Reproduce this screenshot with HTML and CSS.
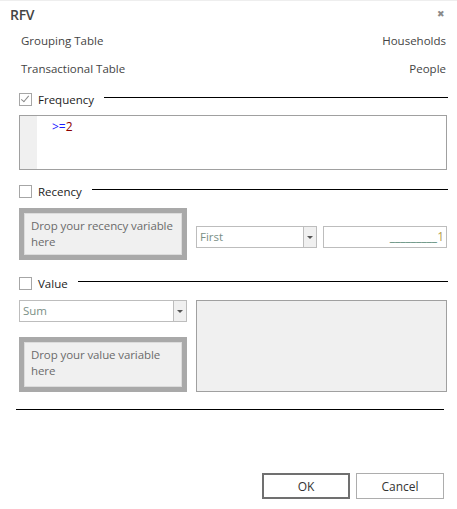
FILE: index.html
```html
<!DOCTYPE html>
<html lang="en">
<head>
	<meta charset="utf-8">
	<title>RFV</title>
	<link rel="stylesheet" href="styles.css">
</head>
<body>
	<div class="dialog">
		<!-- Title bar -->
		<div class="titlebar">
			<span class="title">RFV</span>
			<span class="close">&#x2716;</span>
		</div>

		<!-- Tables -->
		<div class="meta-row"><span>Grouping Table</span><span>Households</span></div>
		<div class="meta-row"><span>Transactional Table</span><span>People</span></div>

		<!-- Frequency -->
		<div class="legend legend-freq">
			<span class="check checked"></span>
			<span class="legend-label">Frequency</span>
			<span class="legend-line"></span>
		</div>
		<div class="editor">
			<div class="gutter"></div>
			<div class="code"><span class="op">&gt;=</span><span class="num">2</span></div>
		</div>

		<!-- Recency -->
		<div class="legend legend-rec">
			<span class="check"></span>
			<span class="legend-label">Recency</span>
			<span class="legend-line"></span>
		</div>
		<div class="recency">
			<div class="dropzone">Drop your recency variable here</div>
			<div class="combo combo-first">
				<span class="combo-text">First</span>
				<span class="combo-btn"><span class="arrow"></span></span>
			</div>
			<div class="numbox"><span class="blank">_________</span><span class="digit">1</span></div>
		</div>

		<!-- Value -->
		<div class="legend legend-val">
			<span class="check"></span>
			<span class="legend-label">Value</span>
			<span class="legend-line"></span>
		</div>
		<div class="value">
			<div class="value-left">
				<div class="combo">
					<span class="combo-text">Sum</span>
					<span class="combo-btn"><span class="arrow"></span></span>
				</div>
				<div class="dropzone dropzone-value">Drop your value variable here</div>
			</div>
			<div class="preview"></div>
		</div>

		<div class="separator"></div>

		<div class="buttons">
			<button class="btn btn-default">OK</button>
			<button class="btn">Cancel</button>
		</div>
	</div>
</body>
</html>
```

FILE: styles.css
```css
body {
	margin: 0;
	background: #fff;
	font-family: "Open Sans", "Noto Sans", sans-serif;
	font-size: 11.5px;
	color: #333;
}

.dialog {
	width: 457px;
	height: 509px;
	padding: 0 10px 0 19px;
	box-sizing: border-box;
	border-top: 1px solid #eee;
}

.titlebar {
	display: flex;
	justify-content: space-between;
	align-items: center;
	height: 26px;
	margin-left: -9px;
	margin-right: 2px;
}

.title {
	font-size: 14px;
	font-weight: 600;
	color: #444;
	letter-spacing: -0.3px;
}

.close {
	font-size: 9px;
	color: #8a8a8a;
	margin-top: -2px;
}

.meta-row {
	display: flex;
	justify-content: space-between;
	height: 28px;
	line-height: 28px;
	padding: 0 1px 0 2px;
	color: #444;
}

.legend {
	display: flex;
	align-items: center;
	height: 22px;
}

.legend-freq {
	margin-top: 5px;
}

.legend-rec {
	margin-top: 10px;
}

.legend-val {
	margin-top: 12px;
}

.check {
	width: 11px;
	height: 11px;
	border: 1px solid #a6a6a6;
	background: #fff;
	position: relative;
	flex: none;
}

.check.checked::after {
	content: "";
	position: absolute;
	left: 3px;
	top: 0px;
	width: 3px;
	height: 7px;
	border: solid #8a8a8a;
	border-width: 0 1px 1px 0;
	transform: rotate(40deg);
}

.legend-label {
	margin-left: 6px;
	font-size: 11.5px;
	color: #222;
}

.legend-line {
	flex: 1;
	height: 1px;
	background: #000;
	margin: -3px -1px 0 10px;
}

.editor {
	display: flex;
	height: 55px;
	margin-top: 5px;
	border: 1px solid #a0a0a0;
	box-sizing: border-box;
}

.gutter {
	width: 17px;
	background: #f0f0f0;
}

.code {
	padding: 4px 0 0 15px;
	font-size: 12px;
	line-height: 14px;
}

.op {
	color: #1a1aff;
}

.num {
	color: #8b0000;
}

.recency {
	display: flex;
	align-items: flex-start;
	margin-top: 6px;
}

.dropzone {
	width: 168px;
	height: 52px;
	flex: none;
	border: 5px solid #a9a9a9;
	outline: 1px solid #dcdcdc;
	outline-offset: -6px;
	background: #f0f0f0;
	padding: 5px 0 0 7px;
	box-sizing: border-box;
	font-size: 11.5px;
	line-height: 16px;
	letter-spacing: -0.1px;
	color: #6b6b6b;
}

.dropzone-value {
	height: 55px;
	margin-top: 15px;
	padding-top: 5px;
}

.combo {
	display: flex;
	width: 168px;
	height: 22px;
	border: 1px solid #bdbdbd;
	box-sizing: border-box;
	background: #fff;
}

.combo-first {
	width: 121px;
	margin: 18px 0 0 9px;
}

.combo-text {
	flex: 1;
	padding-left: 3px;
	line-height: 20px;
	color: #7a8f86;
}

.combo-btn {
	width: 12px;
	border-left: 1px solid #bdbdbd;
	background: #f0f0f0;
	display: flex;
	align-items: center;
	justify-content: center;
}

.arrow {
	width: 0;
	height: 0;
	border-left: 3px solid transparent;
	border-right: 3px solid transparent;
	border-top: 3px solid #555;
}

.numbox {
	flex: 1;
	height: 22px;
	margin: 18px 0 0 6px;
	border: 1px solid #bdbdbd;
	box-sizing: border-box;
	text-align: right;
	padding-right: 2px;
	line-height: 20px;
	color: #5b8a79;
	font-size: 12px;
}

.digit {
	color: #b59f4d;
}

.value {
	display: flex;
	margin-top: 6px;
}

.value-left {
	width: 168px;
}

.preview {
	flex: 1;
	height: 92px;
	margin-left: 9px;
	border: 1px solid #a0a0a0;
	box-sizing: border-box;
	background: #f0f0f0;
}

.separator {
	height: 1px;
	background: #000;
	margin: 17px 3px 0 -3px;
}

.buttons {
	display: flex;
	justify-content: flex-end;
	gap: 6px;
	margin-top: 63px;
	margin-right: 3px;
}

.btn {
	width: 88px;
	height: 26px;
	border: 1px solid #adadad;
	background: #fff;
	font-family: inherit;
	font-size: 12px;
	color: #333;
	padding: 0;
}

.btn-default {
	border: 2px solid #707070;
}
```
